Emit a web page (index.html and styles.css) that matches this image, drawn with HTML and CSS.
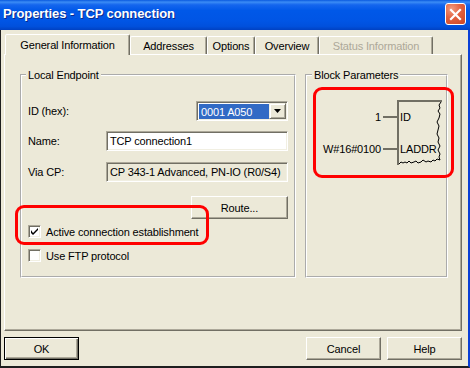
FILE: index.html
```html
<!DOCTYPE html>
<html>
<head>
<meta charset="utf-8">
<title>Properties - TCP connection</title>
<link rel="stylesheet" href="styles.css">
</head>
<body>
<div class="window">
  <div class="titlebar">
    <span class="title">Properties - TCP connection</span>
    <span class="close">
      <svg width="13" height="13" viewBox="0 0 13 13"><path d="M2 2 L11 11 M11 2 L2 11" stroke="#fff" stroke-width="2.2" stroke-linecap="square"/></svg>
    </span>
  </div>
  <div class="frame">
    <div class="tabs">
      <div class="tab active w1">General Information</div>
      <div class="tab w2">Addresses</div>
      <div class="tab w3">Options</div>
      <div class="tab w4">Overview</div>
      <div class="tab w5 disabled">Status Information</div>
    </div>
    <div class="panel">
      <fieldset class="group local">
        <legend>Local Endpoint</legend>
        <div class="group-body">
          <div class="row r1">
            <span class="label">ID (hex):</span>
            <div class="combo">
              <span class="combo-val">0001 A050</span>
              <span class="combo-btn"><svg width="7" height="4" viewBox="0 0 7 4"><path d="M0 0 H7 L3.5 4 Z" fill="#000"/></svg></span>
            </div>
          </div>
          <div class="row r2">
            <span class="label">Name:</span>
            <div class="input">TCP connection1</div>
          </div>
          <div class="row r3">
            <span class="label">Via CP:</span>
            <div class="input readonly">CP 343-1 Advanced, PN-IO (R0/S4)</div>
          </div>
          <div class="route-row">
            <div class="btn route">Route...</div>
          </div>
          <div class="check c1">
            <span class="box"><svg width="7" height="7" viewBox="0 0 7 7"><path d="M0 2 L0 5 L2 7 L7 2 L7 0 L2 5 Z" fill="#000"/></svg></span>
            <span>Active connection establishment</span>
          </div>
          <div class="check c2">
            <span class="box"></span>
            <span>Use FTP protocol</span>
          </div>
        </div>
      </fieldset>
      <fieldset class="group block">
        <legend>Block Parameters</legend>
        <svg class="diagram" width="138" height="194" viewBox="307 82 138 194">
          <g font-family="Liberation Sans, Arial, sans-serif" font-size="11" fill="#000">
            <text x="381" y="121" text-anchor="end">1</text>
            <text x="381" y="153" text-anchor="end">W#16#0100</text>
            <text x="400" y="121">ID</text>
            <text x="400" y="153">LADDR</text>
          </g>
          <g stroke="#716F64" stroke-width="2" fill="none">
            <path d="M383 117 H397"/>
            <path d="M383 149 H397"/>
            <path d="M398 100 V165"/>
            <path d="M397 101 H442"/>
          </g>
          <g stroke="#000" stroke-width="1" fill="none">
            <polyline points="441,102 439,105 440,108 438,111 440,114 439,118 437,122 439,126 438,130 437,134 439,138 438,142 440,146 438,150 440,154 439,157 440,160"/>
            <polyline points="399,164 401,162 403,163 405,162 407,163 409,161 411,163 414,162 416,161 418,163 421,162 423,160 426,162 428,161 431,162 433,160 435,161 437,159 440,160"/>
          </g>
        </svg>
      </fieldset>
    </div>
    <div class="buttons">
      <div class="btn default">OK</div>
      <div class="btn">Cancel</div>
      <div class="btn">Help</div>
    </div>
  </div>
  <div class="mark mark1"></div>
  <div class="mark mark2"></div>
</div>
</body>
</html>
```
FILE: styles.css
```css
* { box-sizing: border-box; }

body {
  margin: 0;
  background: #ECE9D8;
  font: 11px "Liberation Sans", Arial, sans-serif;
  letter-spacing: -0.15px;
  color: #000;
}

.window {
  width: 470px;
  height: 368px;
  display: flex;
  flex-direction: column;
  position: relative;
  overflow: hidden;
  background: #ECE9D8;
}

.titlebar {
  height: 30px;
  flex: none;
  display: flex;
  align-items: flex-start;
  justify-content: space-between;
  padding: 0 4px 0 3px;
  background: linear-gradient(to bottom, #0A5ADF 0%, #3B8CF5 7%, #1566EE 16%, #0058E8 35%, #0055E5 70%, #0050DC 88%, #0041C2 100%);
}

.title {
  margin-top: 6px;
  line-height: 15px;
  color: #fff;
  font: bold 13px "Liberation Sans", Arial, sans-serif;
  letter-spacing: -0.1px;
  text-shadow: 1px 1px 0 #0C2A8A;
  white-space: nowrap;
}

.close {
  margin-top: 3px;
  width: 21px;
  height: 22px;
  border: 1px solid #fff;
  border-radius: 3px;
  background: radial-gradient(circle at 30% 25%, #F19A7E 0%, #E2613F 45%, #CC4522 100%);
  display: flex;
  align-items: center;
  justify-content: center;
}

.frame {
  flex: 1;
  border-left: 1px solid #1E1E1E;
  border-right: 2px solid #0A3FD6;
  border-bottom: 2px solid #1E1E1E;
  padding: 4px 6px 0 3px;
  display: flex;
  flex-direction: column;
}

.tabs {
  height: 20px;
  display: flex;
  align-items: flex-end;
  padding-left: 1px;
}

.tab {
  height: 18px;
  border: 1px solid;
  border-bottom: none;
  border-color: #fff #716F64 transparent #fff;
  border-radius: 2px 2px 0 0;
  box-shadow: inset -1px 0 0 #ACA899;
  display: flex;
  align-items: center;
  justify-content: center;
  white-space: nowrap;
}

.tab.active {
  height: 21px;
  margin-bottom: -1px;
  position: relative;
  z-index: 1;
  background: #ECE9D8;
}

.tab.disabled { color: #ACA899; }

.w1 { width: 125px; }
.w2 { width: 77px; }
.w3 { width: 48px; }
.w4 { width: 64px; }
.w5 { width: 114px; }

.panel {
  height: 277px;
  border: 1px solid;
  border-color: #fff #716F64 #716F64 #fff;
  box-shadow: inset -1px -1px 0 #ACA899;
  padding: 13px 0 0 15px;
  display: flex;
  gap: 9px;
  align-items: flex-start;
}

.group {
  margin: 0;
  padding: 0;
  border: 2px groove #fff;
  height: 210px;
  min-width: 0;
}

.group legend {
  padding: 0 2px;
  line-height: 14px;
}

.local { width: 276px; }
.local legend { margin-left: 4px; }
.block { width: 143px; }
.block legend { margin-left: 5px; }

.group-body {
  padding: 0 6px;
  display: flex;
  flex-direction: column;
}

.row {
  height: 20px;
  display: flex;
  align-items: center;
}

.r1 { margin-top: 19px; }
.r2 { margin-top: 10px; }
.r3 { margin-top: 11px; }

.label { width: 78px; flex: none; }

.combo {
  width: 92px;
  height: 20px;
  margin-left: auto;
  border: 1px solid;
  border-color: #ACA899 #fff #fff #ACA899;
  box-shadow: inset 1px 1px 0 #716F64, inset -1px -1px 0 #F1EFE2;
  background: #fff;
  padding: 2px 1px 1px 2px;
  display: flex;
}

.combo-val {
  flex: 1;
  background: #316AC5;
  color: #fff;
  padding-left: 2px;
  display: flex;
  align-items: center;
}

.combo-btn {
  width: 17px;
  margin-top: -1px;
  border: 1px solid;
  border-color: #F1EFE2 #716F64 #716F64 #F1EFE2;
  box-shadow: inset 1px 1px 0 #fff, inset -1px -1px 0 #ACA899;
  background: #ECE9D8;
  display: flex;
  align-items: center;
  justify-content: center;
}

.input {
  flex: 1;
  height: 20px;
  border: 1px solid;
  border-color: #ACA899 #fff #fff #ACA899;
  box-shadow: inset 1px 1px 0 #716F64, inset -1px -1px 0 #F1EFE2;
  background: #fff;
  padding-left: 3px;
  display: flex;
  align-items: center;
  white-space: nowrap;
}

.input.readonly { background: #ECE9D8; }

.route-row {
  margin-top: 14px;
  display: flex;
  justify-content: flex-end;
}

.btn {
  width: 75px;
  height: 23px;
  border: 1px solid;
  border-color: #fff #716F64 #716F64 #fff;
  box-shadow: inset -1px -1px 0 #ACA899;
  background: #ECE9D8;
  display: flex;
  align-items: center;
  justify-content: center;
}

.btn.route { width: 97px; }

.btn.default {
  border: 1px solid #000;
  box-shadow: inset 1px 1px 0 #fff, inset -1px -1px 0 #716F64, inset -2px -2px 0 #ACA899;
  margin-right: auto;
}

.check {
  height: 13px;
  display: flex;
  align-items: center;
  white-space: nowrap;
}

.c1 { margin-top: 6px; }
.c2 { margin-top: 11px; }

.box {
  width: 13px;
  height: 13px;
  flex: none;
  margin-right: 5px;
  border: 1px solid;
  border-color: #ACA899 #fff #fff #ACA899;
  box-shadow: inset 1px 1px 0 #716F64, inset -1px -1px 0 #F1EFE2;
  background: #fff;
  display: flex;
  align-items: center;
  justify-content: center;
}

.diagram { display: block; }

.buttons {
  margin-top: 6px;
  display: flex;
  gap: 6px;
}

.mark {
  position: absolute;
  border: 3px solid #FF0000;
  border-radius: 9px;
}

.mark1 { left: 15px; top: 205px; width: 194px; height: 40px; }
.mark2 { left: 313px; top: 87px; width: 141px; height: 91px; }
```
